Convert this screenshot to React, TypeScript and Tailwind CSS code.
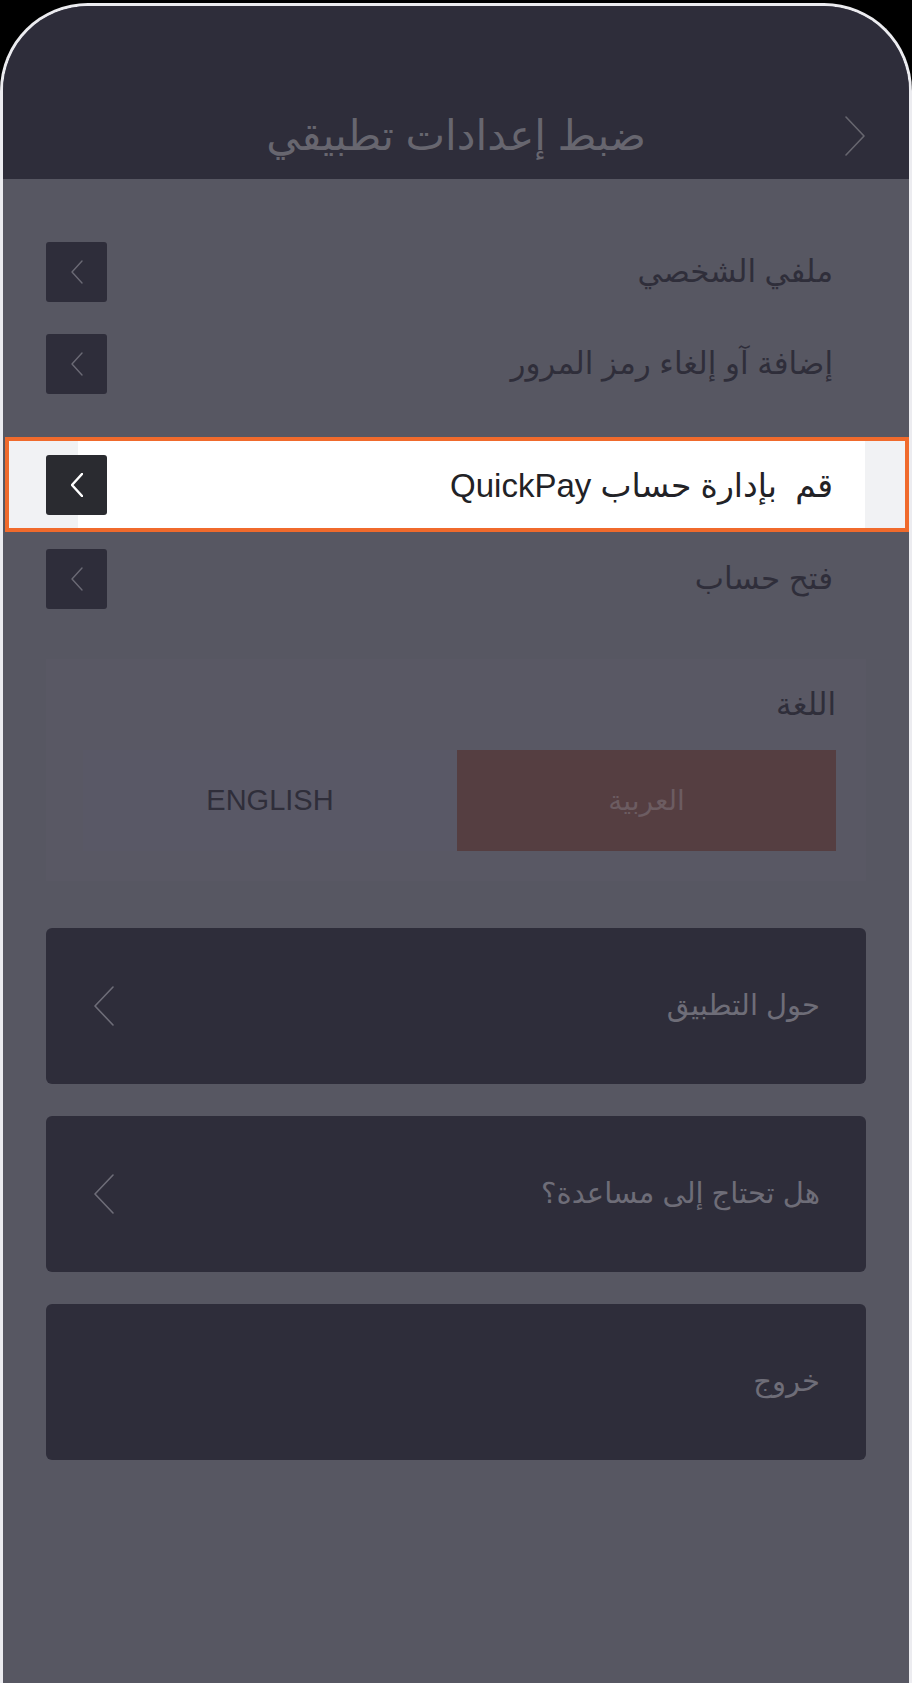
import React from "react";

const font = { fontFamily: '"Liberation Sans", "DejaVu Sans", sans-serif' };

type Row = { label: string; active?: boolean };

const rows: Row[] = [
  { label: "ملفي الشخصي" },
  { label: "إضافة آو إلغاء رمز المرور" },
  { label: "قم  بإدارة حساب QuickPay", active: true },
  { label: "فتح حساب" },
];

const cards = ["حول التطبيق", "هل تحتاج إلى مساعدة؟", "خروج"];

function Chevron({ className, w = 12, h = 22, stroke = 1.5 }: { className?: string; w?: number; h?: number; stroke?: number }) {
  return (
    <svg width={w} height={h} viewBox={`0 0 ${w} ${h}`} className={className} fill="none">
      <polyline
        points={`${w - 1},1 1,${h / 2} ${w - 1},${h - 1}`}
        stroke="currentColor"
        strokeWidth={stroke}
        strokeLinecap="round"
        strokeLinejoin="round"
      />
    </svg>
  );
}

function BoxArrow({ active }: { active?: boolean }) {
  return (
    <div
      className={
        "flex h-[60px] w-[61px] shrink-0 items-center justify-center rounded-[3px] " +
        (active ? "bg-[#2a2b30] text-white" : "bg-[#2e2d3a] text-[#6b6a75]")
      }
    >
      <Chevron w={12} h={24} stroke={active ? 2.5 : 1.4} />
    </div>
  );
}

export default function App() {
  return (
    <div className="h-[1683px] w-[912px] overflow-hidden bg-black pt-[3px]" style={font}>
      <div className="h-[1690px] overflow-hidden rounded-t-[88px] border-x-[3px] border-t-[3px] border-[#ececf0] bg-[#575762]">
        {/* header */}
        <div className="flex h-[173px] items-end bg-[#2e2d3a]">
          <div className="relative flex h-[86px] w-full items-center justify-center">
            <span className="text-[42px] leading-[50px] text-[#67666f]" dir="rtl">
              ضبط إعدادات تطبيقي
            </span>
            <Chevron className="absolute right-[44px] rotate-180 text-[#67666f]" w={20} h={40} stroke={1.6} />
          </div>
        </div>

        {/* settings list */}
        <div className="pt-[63px]">
          {rows.map((r, i) => {
            const mt = i === 0 ? "" : i === 1 ? "mt-[32px]" : i === 2 ? "mt-[43px]" : "mt-[17px]";
            if (r.active) {
              return (
                <div
                  key={i}
                  dir="rtl"
                  className={
                    mt +
                    " ml-[2px] flex h-[95px] items-center justify-between border-[4px] border-[#f06a2c] pl-[37px] pr-[72px] bg-[linear-gradient(to_right,#f1f2f4_69px,#ffffff_69px,#ffffff_calc(100%-40px),#f1f2f4_calc(100%-40px))]"
                  }
                >
                  <span className="whitespace-pre pt-[2px] text-[33px] text-[#222226]">{r.label}</span>
                  <BoxArrow active />
                </div>
              );
            }
            return (
              <div key={i} dir="rtl" className={mt + " flex h-[60px] items-center justify-between pl-[43px] pr-[76px]"}>
                <span className="text-[31px] text-[#2f2e3a]">{r.label}</span>
                <BoxArrow />
              </div>
            );
          })}
        </div>

        {/* language */}
        <div className="mx-[43px] mt-[50px] h-[222px] bg-[#595864] pl-[37px] pr-[30px] pt-[26px]" dir="rtl">
          <div className="h-[44px] text-[31px] leading-[40px] text-[#2f2e3a]">اللغة</div>
          <div className="mt-[21px] flex h-[101px]">
            <div className="flex w-[379px] items-center justify-center bg-[#553e41] text-[28px] text-[#6c5c61]">العربية</div>
            <div className="flex flex-1 items-center justify-center bg-[#595866] text-[29px] text-[#2f2e3a]" dir="ltr">
              ENGLISH
            </div>
          </div>
        </div>

        {/* cards */}
        <div className="mt-[47px] flex flex-col gap-[32px] px-[43px]">
          {cards.map((c, i) => (
            <div
              key={i}
              dir="rtl"
              className="flex h-[156px] items-center justify-between rounded-[6px] bg-[#2e2d3a] pl-[48px] pr-[46px]"
            >
              <span className="text-[29px] text-[#6e6d78]">{c}</span>
              {i < 2 && <Chevron className="text-[#6e6d78]" w={20} h={40} stroke={1.6} />}
            </div>
          ))}
        </div>
      </div>
    </div>
  );
}
